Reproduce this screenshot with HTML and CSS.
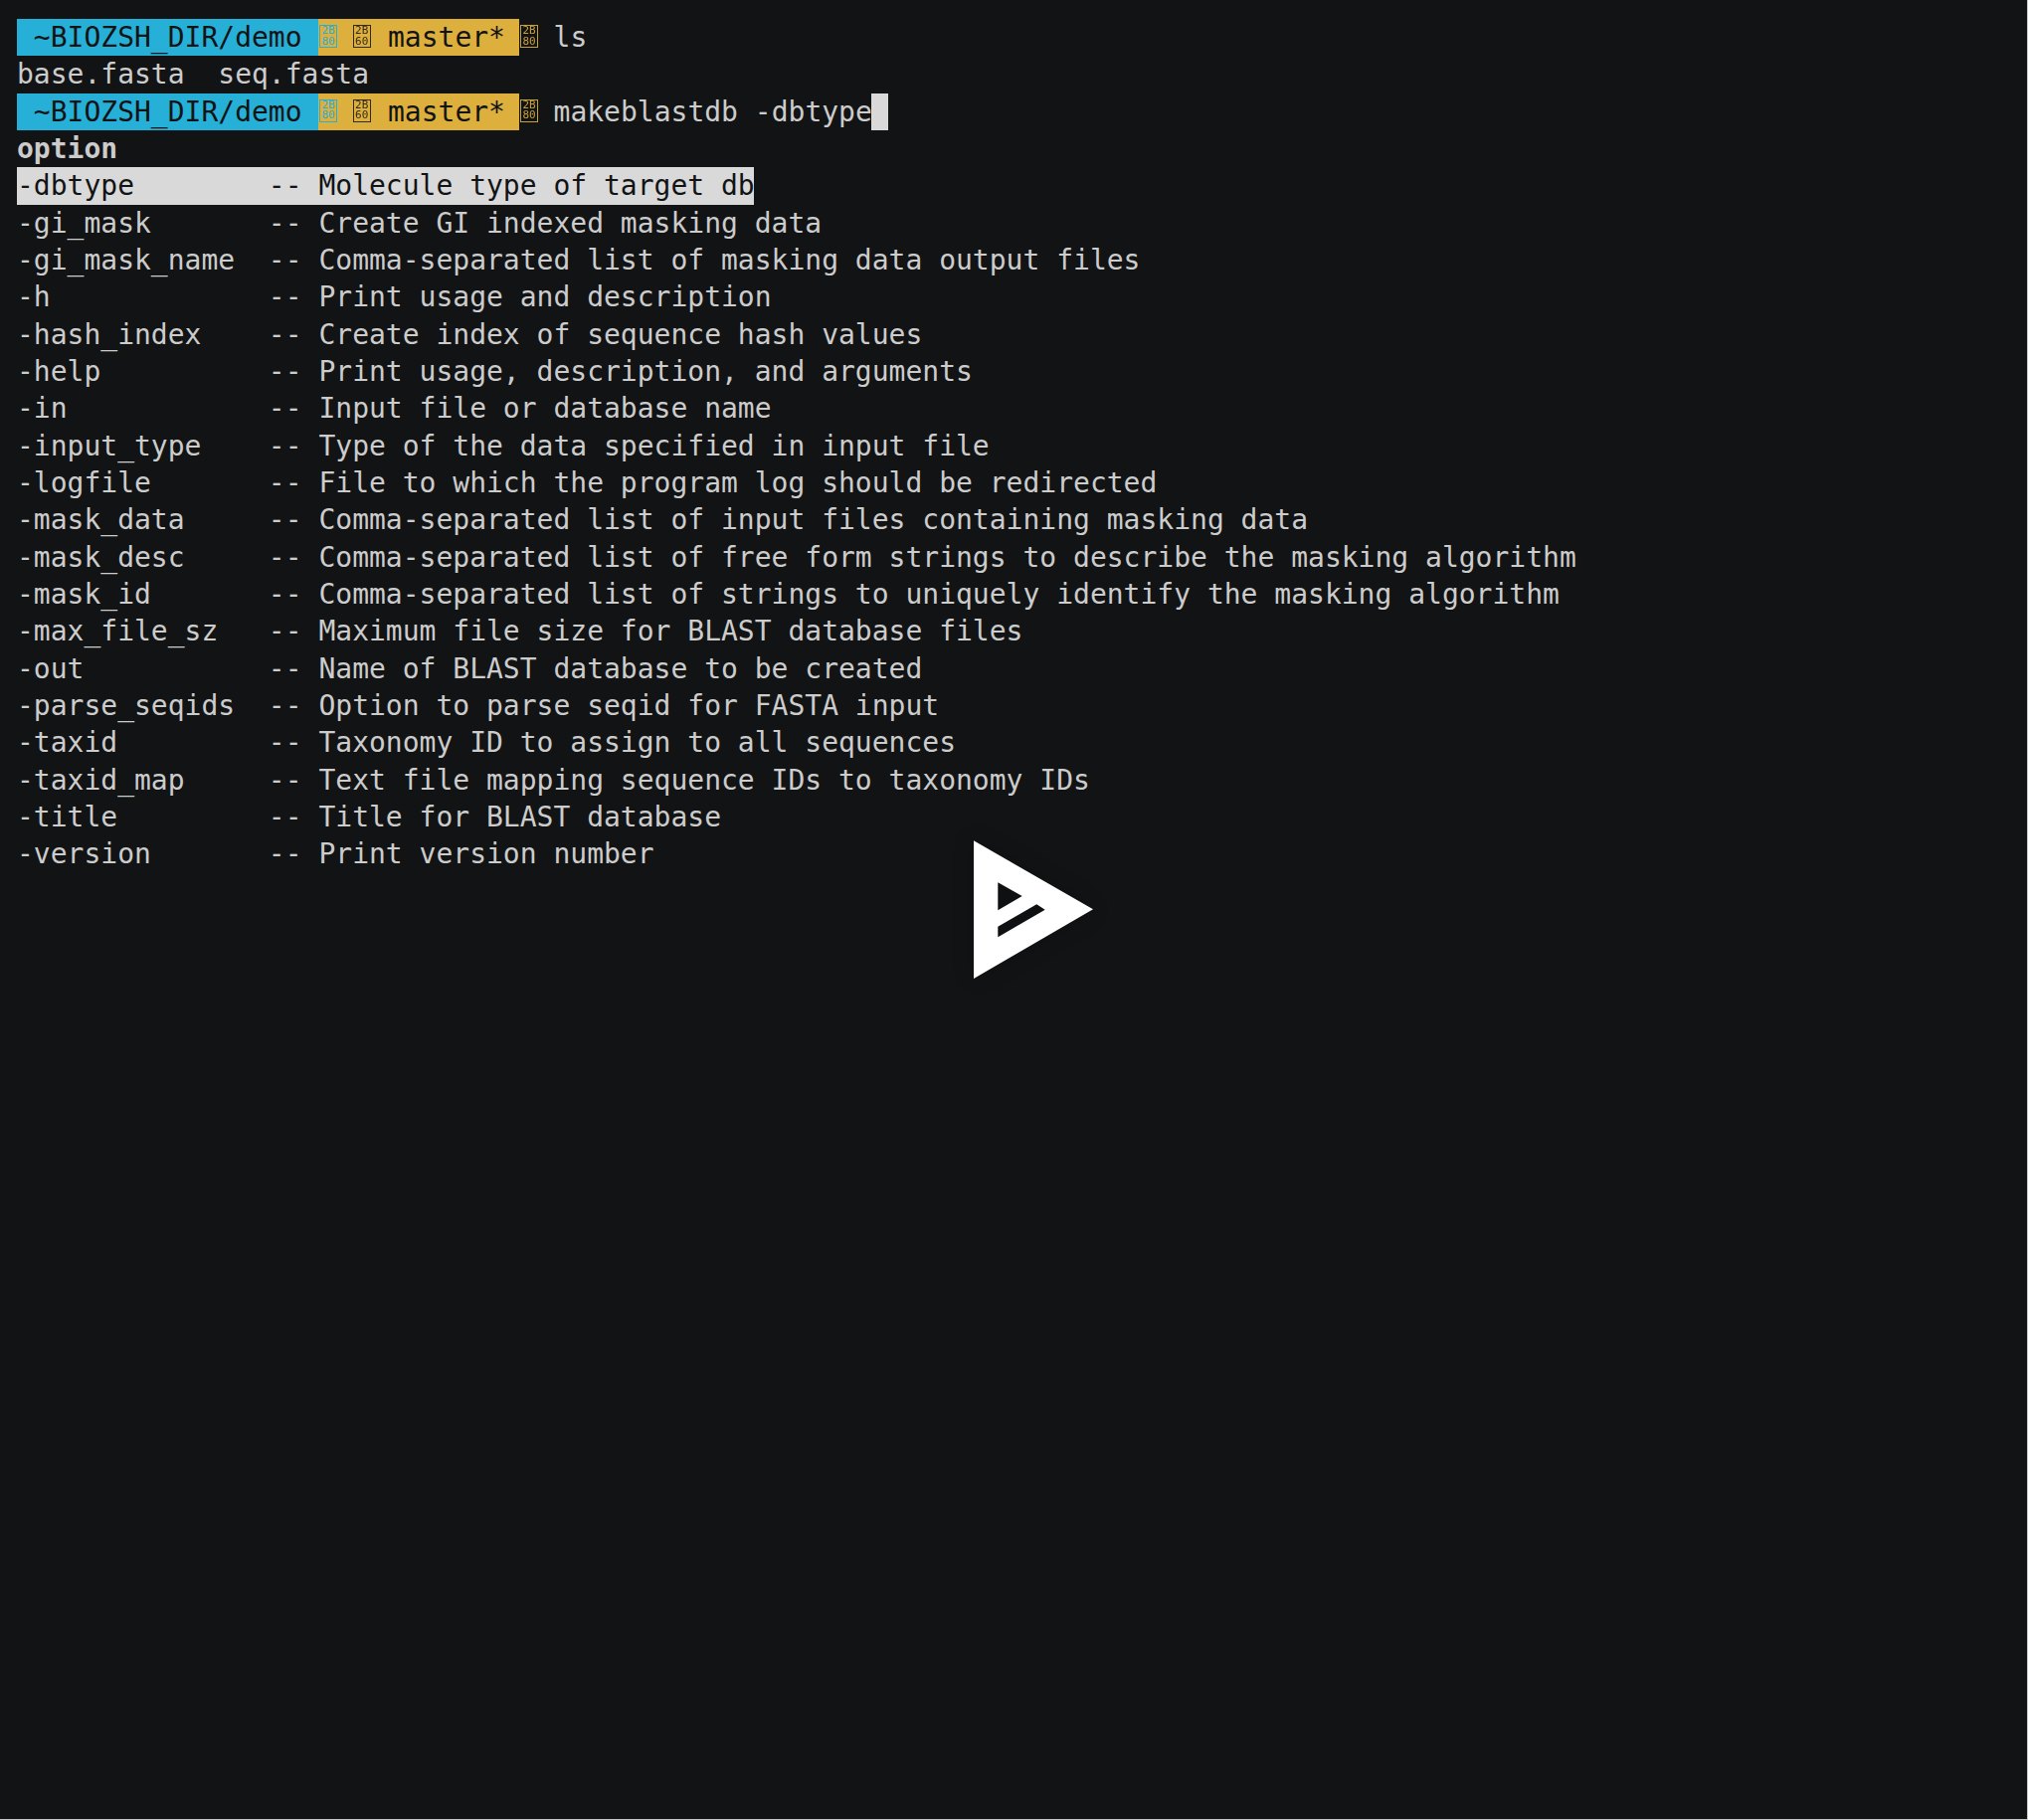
FILE: index.html
```html
<!DOCTYPE html>
<html lang="en">
<head>
<meta charset="utf-8">
<title>makeblastdb</title>
<link rel="stylesheet" href="styles.css">
</head>
<body>
<main class="term">
<div class="line"><span class="blue"> ~BIOZSH_DIR/demo </span><span class="yellow"><span class="tofu t-blue">2B<br>80</span> <span class="tofu t-dark">2B<br>60</span> <span class="branch">master*</span></span><span class="tofu t-yellow">2B<br>80</span> ls</div>
<div class="line">base.fasta  seq.fasta</div>
<div class="line"><span class="blue"> ~BIOZSH_DIR/demo </span><span class="yellow"><span class="tofu t-blue">2B<br>80</span> <span class="tofu t-dark">2B<br>60</span> <span class="branch">master*</span></span><span class="tofu t-yellow">2B<br>80</span> makeblastdb -dbtype<span class="cursor"></span></div>
<div class="line"><b class="bold">option</b></div>
<div class="line"><span class="selected">-dbtype        -- Molecule type of target db</span></div>
<div class="line">-gi_mask       -- Create GI indexed masking data</div>
<div class="line">-gi_mask_name  -- Comma-separated list of masking data output files</div>
<div class="line">-h             -- Print usage and description</div>
<div class="line">-hash_index    -- Create index of sequence hash values</div>
<div class="line">-help          -- Print usage, description, and arguments</div>
<div class="line">-in            -- Input file or database name</div>
<div class="line">-input_type    -- Type of the data specified in input file</div>
<div class="line">-logfile       -- File to which the program log should be redirected</div>
<div class="line">-mask_data     -- Comma-separated list of input files containing masking data</div>
<div class="line">-mask_desc     -- Comma-separated list of free form strings to describe the masking algorithm</div>
<div class="line">-mask_id       -- Comma-separated list of strings to uniquely identify the masking algorithm</div>
<div class="line">-max_file_sz   -- Maximum file size for BLAST database files</div>
<div class="line">-out           -- Name of BLAST database to be created</div>
<div class="line">-parse_seqids  -- Option to parse seqid for FASTA input</div>
<div class="line">-taxid         -- Taxonomy ID to assign to all sequences</div>
<div class="line">-taxid_map     -- Text file mapping sequence IDs to taxonomy IDs</div>
<div class="line">-title         -- Title for BLAST database</div>
<div class="line">-version       -- Print version number</div>
</main>
<svg class="play" viewBox="0 0 120 140" aria-hidden="true">
<path fill-rule="evenodd" d="M0 .3 120 69.3 0 139ZM24.3 42.3V70.3L48.7 56ZM63.3 64.3 24.3 86.7V97.3L71.7 69.7Z"/>
</svg>
</body>
</html>
```
FILE: styles.css
```css
html, body {
  margin: 0;
  padding: 0;
}

body {
  position: relative;
  box-sizing: border-box;
  width: 2039px;
  height: 1830px;
  overflow: hidden;
  background: #121314;
  border-right: 1px solid #c8c8c8;
  border-bottom: 1px solid #c8c8c8;
}

.term {
  padding: 19px 0 0 17px;
  color: #cccccc;
  font-family: "DejaVu Sans Mono", monospace;
  font-size: 28px;
}

.line {
  height: 37.333px;
  line-height: 37.9px;
  white-space: pre;
}

.blue,
.yellow,
.selected {
  display: inline-block;
  vertical-align: top;
  line-height: 37.333px;
  color: #121314;
}

.blue {
  width: 303px;
  background: #26b0d7;
}

.yellow {
  width: 202px;
  background: #ddaf3c;
}

.branch {
  margin-left: 2.5px;
}

.bold {
  font-weight: bold;
}

.selected {
  width: 741px;
  background: #d9d9d9;
}

.cursor {
  display: inline-block;
  vertical-align: top;
  width: 17px;
  height: 37.333px;
  margin-left: -.5px;
  background: #d9d9d9;
}

.tofu {
  display: inline-block;
  box-sizing: border-box;
  width: 18px;
  height: 23px;
  margin: 6px -2.14px 0 1px;
  vertical-align: top;
  border: 1px solid;
  font-size: 11px;
  line-height: 10.5px;
  text-align: center;
  white-space: normal;
}

.t-blue {
  color: #26b0d7;
}

.t-dark {
  color: #121314;
  opacity: .85;
}

.t-yellow {
  margin-right: -1.34px;
  color: #ddaf3c;
  opacity: .9;
}

.play {
  position: absolute;
  left: 979px;
  top: 845px;
  width: 120px;
  height: 140px;
  fill: #ffffff;
  filter: drop-shadow(0 0 10px rgba(0, 0, 0, .2));
}
```
